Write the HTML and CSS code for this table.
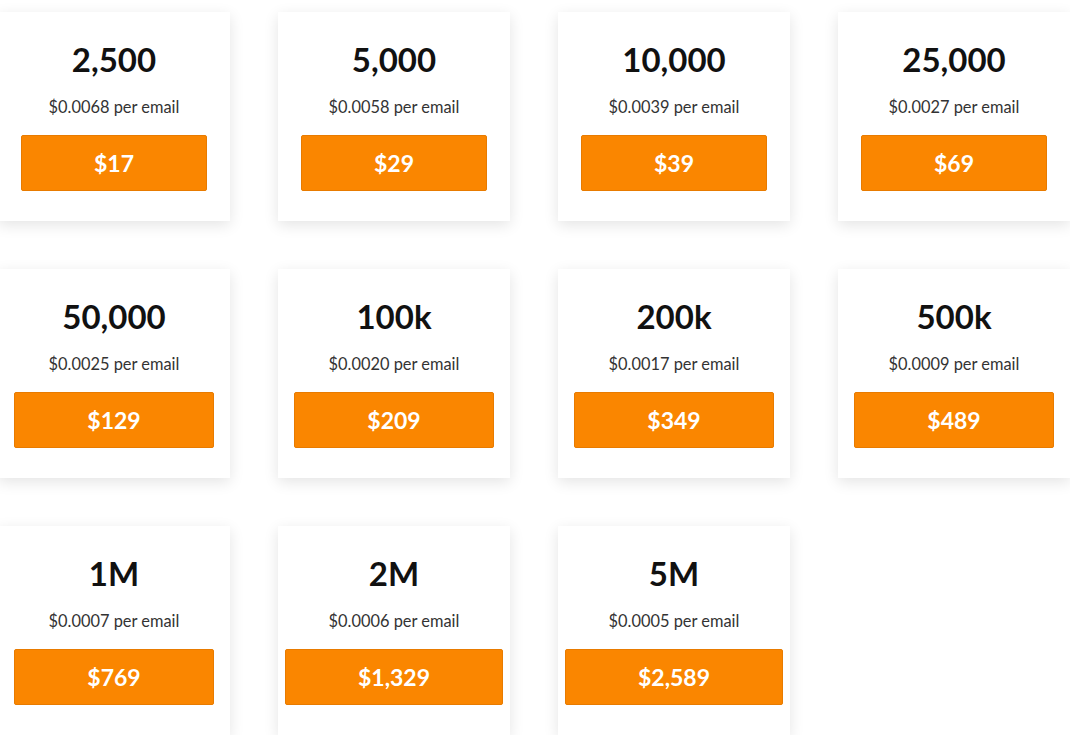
FILE: index.html
```html
<!DOCTYPE html>
<html lang="en">
<head>
<meta charset="UTF-8">
<meta name="viewport" content="width=device-width, initial-scale=1.0">
<title>Email Credits</title>
<link rel="stylesheet" href="styles.css">
</head>
<body>

<div class="plans">
  <div class="plan"><h2>2,500</h2><p>$0.0068 per email</p><button>$17</button></div>
  <div class="plan"><h2>5,000</h2><p>$0.0058 per email</p><button>$29</button></div>
  <div class="plan"><h2>10,000</h2><p>$0.0039 per email</p><button>$39</button></div>
  <div class="plan"><h2>25,000</h2><p>$0.0027 per email</p><button>$69</button></div>

  <div class="plan"><h2>50,000</h2><p>$0.0025 per email</p><button>$129</button></div>
  <div class="plan"><h2>100k</h2><p>$0.0020 per email</p><button>$209</button></div>
  <div class="plan"><h2>200k</h2><p>$0.0017 per email</p><button>$349</button></div>
  <div class="plan"><h2>500k</h2><p>$0.0009 per email</p><button>$489</button></div>

  <div class="plan"><h2>1M</h2><p>$0.0007 per email</p><button>$769</button></div>
  <div class="plan"><h2>2M</h2><p>$0.0006 per email</p><button>$1,329</button></div>
  <div class="plan"><h2>5M</h2><p>$0.0005 per email</p><button>$2,589</button></div>
</div>

</body>
</html>
```

FILE: styles.css
```css
body {
  font-family: 'Lato', 'Liberation Sans', sans-serif;
  margin: 0;
  padding: 0;
  background: #fff;
  color: #222;
  overflow: hidden;
}

h2, p { margin: 0; }

.plans {
  display: grid;
  grid-template-columns: repeat(4, 232px);
  gap: 48px;
  margin: 12px 0 0 -2px;
}

.plan {
  background: #fff;
  box-shadow: 0 4px 14px rgba(0,0,0,0.11);
  display: flex;
  flex-direction: column;
  align-items: center;
  padding: 27px 0 30px;
}

.plan h2 {
  font-size: 33px;
  line-height: 40px;
  font-weight: 700;
  color: #111;
}

.plan p {
  margin-top: 18px;
  font-size: 16.4px;
  line-height: 20px;
  color: #333;
}

.plan button {
  margin-top: 18px;
  height: 56px;
  padding: 0 72px;
  border: 1px solid #e87b00;
  border-radius: 2px;
  background: #fa8600;
  color: #fff;
  font-family: inherit;
  font-size: 23px;
  font-weight: 700;
  cursor: pointer;
}
```
